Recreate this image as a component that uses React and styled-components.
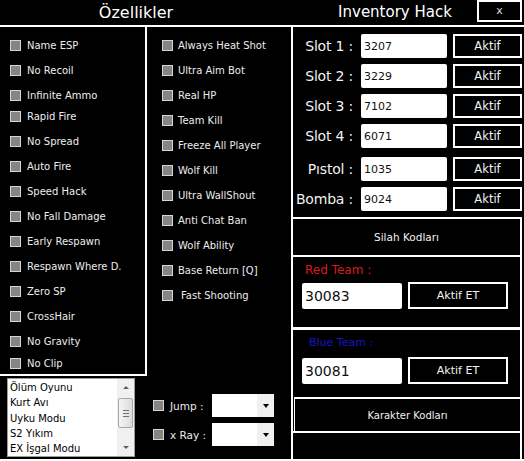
import styled, { createGlobalStyle } from 'styled-components';

const GlobalStyle = createGlobalStyle`
  html, body {
    margin: 0;
    padding: 0;
    background: #000;
  }
  body {
    font-family: "DejaVu Sans", Verdana, sans-serif;
  }
`;

const Window = styled.div`
  width: 524px;
  height: 461px;
  background: #000;
  color: #f2f2f2;
  display: flex;
  flex-direction: column;
  overflow: hidden;

  * {
    box-sizing: border-box;
  }
`;

const TitleBar = styled.div`
  display: flex;
  align-items: flex-start;
  height: 27px;
  border-bottom: 2px solid #fff;
`;

const Heading = styled.h1`
  margin: 0 0 0 ${p => p.$offset || 0}px;
  width: ${p => p.$width}px;
  height: 25px;
  line-height: 25px;
  text-align: center;
  font-size: ${p => p.$size}px;
  font-weight: normal;
  color: #fff;
`;

const CloseButton = styled.button`
  width: 45px;
  height: 22px;
  padding: 0 0 2px;
  background: #000;
  color: #ddd;
  border: 2px solid #fff;
  font: 11px "DejaVu Sans", sans-serif;
`;

const Body = styled.div`
  display: flex;
  height: 434px;
  border-bottom: 2px solid #fff;
`;

const LeftColumn = styled.div`
  width: 147px;
  display: flex;
  flex-direction: column;
`;

const CheckGroup = styled.div`
  height: 349px;
  padding: 6px 0 0 10px;
  border-right: 2px solid #fff;
  border-bottom: 2px solid #fff;
`;

const MiddleColumn = styled.div`
  width: 144px;
  display: flex;
  flex-direction: column;
`;

const MiddleChecks = styled.div`
  padding: 6px 0 0 15px;
`;

const CheckRow = styled.label`
  display: flex;
  align-items: center;
  gap: ${p => p.$gap}px;
  height: 25px;
  margin-top: ${p => p.$nudge || 0}px;
  font-size: 10px;
  color: #ededed;
  white-space: nowrap;

  span {
    padding-left: ${p => p.$indent || 0}px;
  }
`;

const Box = styled.span`
  flex: none;
  width: 11px;
  height: 11px;
  background: #858585;
  border: 1px solid #d6d6d6;
`;

const ListArea = styled.div`
  flex: 1;
  padding: 2px 0 0 7px;
`;

const ListBox = styled.div`
  width: 128px;
  height: 79px;
  display: flex;
  background: #fff;
  border: 1px solid #9c9c9c;
`;

const ListItems = styled.ul`
  flex: 1;
  margin: 0;
  padding: 1px 0 0 2px;
  list-style: none;
  color: #000;
  font-size: 10px;

  li {
    height: 15.25px;
    line-height: 15px;
    white-space: nowrap;
  }
`;

const ScrollBar = styled.div`
  width: 17px;
  display: flex;
  flex-direction: column;
  background: #f0f0f0;
`;

const ScrollArrow = styled.div`
  height: 17px;
  display: flex;
  align-items: center;
  justify-content: center;

  &::after {
    content: '';
    border-left: 3px solid transparent;
    border-right: 3px solid transparent;
    ${p => (p.$down ? 'border-top' : 'border-bottom')}: 3px solid #606060;
  }
`;

const ScrollTrack = styled.div`
  flex: 1;
  padding: 2px 1px 0;
`;

const ScrollThumb = styled.div`
  height: 30px;
  display: flex;
  flex-direction: column;
  align-items: center;
  justify-content: center;
  gap: 2px;
  background: linear-gradient(90deg, #f4f4f4, #dcdcdc);
  border: 1px solid #a8a8a8;
  border-radius: 2px;

  i {
    width: 6px;
    height: 1px;
    background: #707070;
  }
`;

const OptionGroup = styled.div`
  margin-top: auto;
  display: flex;
  flex-direction: column;
  gap: 6px;
  padding: 0 0 13px 6px;
`;

const OptionRow = styled.div`
  display: flex;
  align-items: center;
  height: 23px;
  gap: 6px;
`;

const OptionLabel = styled.span`
  width: 36px;
  font-size: 10.5px;
  color: #ededed;
  white-space: nowrap;
`;

const Combo = styled.div`
  width: 62px;
  height: 23px;
  display: flex;
  justify-content: flex-end;
  background: #fff;
`;

const ComboArrow = styled.span`
  width: 17px;
  display: flex;
  align-items: center;
  justify-content: center;
  background: #f0f0f0;

  &::after {
    content: '';
    border-left: 3.5px solid transparent;
    border-right: 3.5px solid transparent;
    border-top: 4px solid #000;
  }
`;

const RightPanel = styled.div`
  width: 231px;
  display: flex;
  flex-direction: column;
  border-left: 2px solid #fff;
`;

const SlotSection = styled.div`
  height: 190px;
  padding-top: 7px;
  display: flex;
  flex-direction: column;
  gap: 6px;
`;

const SlotRow = styled.div`
  display: flex;
  align-items: center;
  height: 24px;
  margin-top: ${p => p.$nudge || 0}px;
`;

const SlotLabel = styled.span`
  width: 68px;
  padding-right: 8px;
  text-align: right;
  font-size: 14px;
  letter-spacing: -0.2px;
  color: #f2f2f2;
  white-space: nowrap;
`;

const Field = styled.input`
  width: ${p => p.$width}px;
  height: ${p => p.$height}px;
  padding: 0 0 0 3px;
  border: none;
  border-radius: 2px;
  background: #fff;
  color: #111;
  font: ${p => p.$size}px "DejaVu Sans", sans-serif;
  outline: none;
`;

const ActionButton = styled.button`
  width: ${p => p.$width}px;
  height: ${p => p.$height}px;
  margin-left: 6px;
  padding: 0;
  background: #000;
  color: #f2f2f2;
  border: 2px solid #fff;
  font: ${p => p.$size}px "DejaVu Sans", sans-serif;
`;

const Section = styled.div`
  height: ${p => (p.$height ? `${p.$height}px` : 'auto')};
  flex: ${p => (p.$height ? 'none' : 1)};
  border-top: ${p => p.$top || 2}px solid #fff;
  border-right: 2px solid #fff;
  border-left: ${p => (p.$inset ? '1px solid #fff' : 'none')};
  margin-left: ${p => (p.$inset ? 1 : 0)}px;
`;

const SectionCaption = styled.div`
  height: 100%;
  display: flex;
  align-items: center;
  justify-content: center;
  font-size: ${p => p.$size}px;
  color: #f2f2f2;
`;

const TeamSection = styled(Section)`
  padding-top: 6px;
`;

const TeamLabel = styled.div`
  height: 14px;
  line-height: 14px;
  padding-left: ${p => p.$indent}px;
  font-size: ${p => p.$size}px;
  color: ${p => p.$color};
`;

const TeamRow = styled.div`
  display: flex;
  align-items: center;
  margin-top: ${p => p.$gap}px;
  padding-left: 9px;
`;

const leftChecks = [
  ['Name ESP'],
  ['No Recoil'],
  ['Infinite Ammo'],
  ['Rapid Fire', -4],
  ['No Spread'],
  ['Auto Fire'],
  ['Speed Hack'],
  ['No Fall Damage'],
  ['Early Respawn'],
  ['Respawn Where D.'],
  ['Zero SP'],
  ['CrossHair'],
  ['No Gravity'],
  ['No Clip', -3],
];

const middleChecks = [
  ['Always Heat Shot'],
  ['Ultra Aim Bot'],
  ['Real HP'],
  ['Team Kill'],
  ['Freeze All Player'],
  ['Wolf Kill'],
  ['Ultra WallShout'],
  ['Anti Chat Ban'],
  ['Wolf Ability'],
  ['Base Return [Q]'],
  ['Fast Shooting', 0, 3],
];

const modes = ['Ölüm Oyunu', 'Kurt Avı', 'Uyku Modu', 'S2 Yıkım', 'EX İşgal Modu'];

const slots = [
  ['Slot 1 :', '3207'],
  ['Slot 2 :', '3229'],
  ['Slot 3 :', '7102'],
  ['Slot 4 :', '6071'],
  ['Pıstol :', '1035', 3],
  ['Bomba :', '9024'],
];

function App() {
  return (
    <Window>
      <GlobalStyle />
      <TitleBar>
        <Heading $width={272} $size={16}>Özellikler</Heading>
        <Heading $width={164} $offset={41} $size={15}>Inventory Hack</Heading>
        <CloseButton>x</CloseButton>
      </TitleBar>

      <Body>
        <LeftColumn>
          <CheckGroup>
            {leftChecks.map(([name, nudge]) => (
              <CheckRow key={name} $gap={6} $nudge={nudge}>
                <Box />
                <span>{name}</span>
              </CheckRow>
            ))}
          </CheckGroup>
          <ListArea>
            <ListBox>
              <ListItems>
                {modes.map(m => (
                  <li key={m}>{m}</li>
                ))}
              </ListItems>
              <ScrollBar>
                <ScrollArrow />
                <ScrollTrack>
                  <ScrollThumb>
                    <i />
                    <i />
                    <i />
                  </ScrollThumb>
                </ScrollTrack>
                <ScrollArrow $down />
              </ScrollBar>
            </ListBox>
          </ListArea>
        </LeftColumn>

        <MiddleColumn>
          <MiddleChecks>
            {middleChecks.map(([name, nudge, indent]) => (
              <CheckRow key={name} $gap={5} $nudge={nudge} $indent={indent}>
                <Box />
                <span>{name}</span>
              </CheckRow>
            ))}
          </MiddleChecks>
          <OptionGroup>
            <OptionRow>
              <Box />
              <OptionLabel>Jump :</OptionLabel>
              <Combo>
                <ComboArrow />
              </Combo>
            </OptionRow>
            <OptionRow>
              <Box />
              <OptionLabel>x Ray :</OptionLabel>
              <Combo>
                <ComboArrow />
              </Combo>
            </OptionRow>
          </OptionGroup>
        </MiddleColumn>

        <RightPanel>
          <SlotSection>
            {slots.map(([label, code, nudge]) => (
              <SlotRow key={label} $nudge={nudge}>
                <SlotLabel>{label}</SlotLabel>
                <Field readOnly value={code} $width={86} $height={24} $size={11} />
                <ActionButton $width={69} $height={24} $size={11.5}>Aktif</ActionButton>
              </SlotRow>
            ))}
          </SlotSection>

          <Section $height={38}>
            <SectionCaption $size={10.5}>Silah Kodları</SectionCaption>
          </Section>

          <TeamSection $height={72}>
            <TeamLabel $indent={12} $size={12} $color="#dc1a1a">Red Team :</TeamLabel>
            <TeamRow $gap={5}>
              <Field readOnly value="30083" $width={100} $height={26} $size={14} />
              <ActionButton $width={100} $height={27} $size={11}>Aktif ET</ActionButton>
            </TeamRow>
          </TeamSection>

          <TeamSection $height={70} $top={3}>
            <TeamLabel $indent={16} $size={11} $color="#1515c4">Blue Team :</TeamLabel>
            <TeamRow $gap={7}>
              <Field readOnly value="30081" $width={100} $height={26} $size={14} />
              <ActionButton $width={100} $height={27} $size={11}>Aktif ET</ActionButton>
            </TeamRow>
          </TeamSection>

          <Section $height={34} $inset>
            <SectionCaption $size={10}>Karakter Kodları</SectionCaption>
          </Section>

          <Section />
        </RightPanel>
      </Body>
    </Window>
  );
}

export default App;
